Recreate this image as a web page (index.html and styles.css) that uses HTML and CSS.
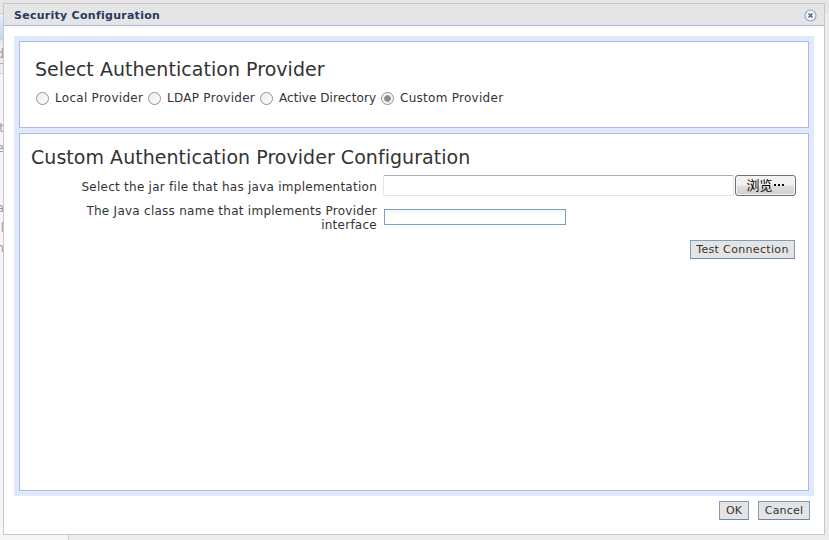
FILE: index.html
```html
<!DOCTYPE html>
<html lang="en">
<head>
<meta charset="utf-8">
<title>Security Configuration</title>
<link rel="stylesheet" href="styles.css">
</head>
<body>
<div class="backdrop" aria-hidden="true">
  <div class="back-top"></div>
  <div class="back-tab"></div>
  <div class="back-tool">d</div>
  <div class="back-line"></div>
  <div class="back-list"><span>t</span><span>e</span><span></span><span></span><span>a</span><span>l</span><span>m</span></div>
  <div class="back-foot"><div class="back-split"></div></div>
</div>
<div class="dialog" role="dialog">
  <header class="title-bar">
    <h1 class="title">Security Configuration</h1>
    <svg class="close" width="13" height="13" viewBox="0 0 13 13"><circle cx="6.5" cy="6.5" r="5.5" fill="#f4f6fb" stroke="#8fa5cf" stroke-width="1.2"/><path d="M4.5 4.5l4 4M8.5 4.5l-4 4" stroke="#555" stroke-width="1.3"/></svg>
  </header>
  <main class="panel">
    <section class="box provider">
      <h2 class="heading select-heading">Select Authentication Provider</h2>
      <div class="options">
        <label class="option local"><i class="radio"></i><span>Local Provider</span></label>
        <label class="option ldap"><i class="radio"></i><span>LDAP Provider</span></label>
        <label class="option active"><i class="radio"></i><span>Active Directory</span></label>
        <label class="option custom"><i class="radio checked"></i><span>Custom Provider</span></label>
      </div>
    </section>
    <section class="box config">
      <h2 class="heading config-heading">Custom Authentication Provider Configuration</h2>
      <div class="row file-row">
        <span class="label">Select the jar file that has java implementation</span>
        <div class="file"></div>
        <button class="browse">浏览<svg width="12" height="3" viewBox="0 0 12 3"><path d="M1 0h2v2h-2zM5 0h2v2h-2zM9 0h2v2h-2z"/></svg></button>
      </div>
      <div class="row class-row">
        <span class="label">The Java class name that implements Provider<br>interface</span>
        <input class="class-name" type="text">
      </div>
      <div class="test-row"><button class="button test">Test Connection</button></div>
    </section>
  </main>
  <footer class="actions">
    <button class="button ok">OK</button>
    <button class="button cancel">Cancel</button>
  </footer>
</div>
</body>
</html>
```
FILE: styles.css
```css
* { box-sizing: border-box; }
body {
  margin: 0;
  width: 829px;
  height: 540px;
  overflow: hidden;
  background: #ececec;
  color: #333;
  font-family: "DejaVu Sans", "Noto Sans CJK SC", sans-serif;
  font-size: 12px;
}
.backdrop { height: 540px; display: flex; flex-direction: column; color: #999; font-size: 12px; }
.back-top { height: 13px; background: #e6e6e6; }
.back-tab { height: 27px; width: 4px; border-top: 1px solid #b9c7e2; background: linear-gradient(#e4edfa, #c3d4ef); }
.back-tool { height: 24px; width: 4px; border-top: 5px solid #e6e6e6; border-bottom: 1px solid #aaa; overflow: hidden; line-height: 18px; direction: rtl; }
.back-line { height: 10px; width: 4px; border-bottom: 1px solid #c9d5e9; }
.back-list { height: 461px; width: 4px; padding-top: 44px; background: #f6f6f6; overflow: hidden; direction: rtl; }
.back-list span { display: block; height: 20px; line-height: 20px; white-space: nowrap; }
.back-foot { height: 5px; width: 69px; background: #f6f6f6; display: flex; justify-content: flex-end; }
.back-split { width: 1px; background: #c4cde4; }
.dialog {
  position: absolute;
  left: 3px;
  top: 3px;
  width: 822px;
  height: 532px;
  border: 1px solid #c8c8c8;
  background: #fff;
}
.title-bar { height: 22px; display: flex; align-items: center; justify-content: space-between; padding: 0 7px 0 10px; background: #e5e5e5; border-bottom: 1px solid #aebbe0; }
.title { margin: 3px 0 0; font: bold 11px/14px "DejaVu Sans", sans-serif; letter-spacing: .27px; color: #2a3860; white-space: nowrap; }
.close { margin-top: 1px; }
.panel { width: 800px; height: 460px; margin: 10px 0 0 10px; padding: 5px; background: #e0e9fb; }
.box { border: 1px solid #aebbdf; background: #fff; }
.provider { height: 87px; padding: 14px 15px; }
.config { height: 358px; margin-top: 5px; padding: 10px 11px; }
.heading { margin: 0; font-weight: 400; font-size: 19px; line-height: 26px; white-space: nowrap; letter-spacing: .04px; }
.options { display: flex; height: 16px; margin-top: 8px; }
.option { display: flex; flex: none; line-height: 16px; white-space: nowrap; letter-spacing: .28px; }
.local, .ldap { width: 112px; }
.active { width: 121px; letter-spacing: .05px; }
.radio { width: 13px; height: 13px; margin: 2px 6px 0 1px; border: 1px solid #929292; border-radius: 50%; background: linear-gradient(135deg, #ececec, #fff); flex: none; }
.checked { background: radial-gradient(circle, #888 0 2px, #999 3px, #f3f3f3 3.8px); }
.row { display: flex; }
.label { width: 346px; text-align: right; line-height: 14px; white-space: nowrap; letter-spacing: .26px; }
.file-row { height: 26px; margin-top: 5px; }
.file-row .label { padding-top: 5px; }
.file { width: 351px; height: 21px; margin-left: 6px; border: 1px solid #e2e5ec; border-top-color: #abadb3; border-radius: 2px; }
.browse { width: 61px; height: 21px; margin: 0 0 0 1px; padding: 0; border: 1px solid #707070; border-radius: 3px; background: linear-gradient(#f2f2f2 0 45%, #dedede 55%, #cfcfcf); box-shadow: inset 0 0 0 1px #f5f5f5; color: #000; font: 13px/18px "Noto Sans CJK SC", sans-serif; display: flex; justify-content: center; }
.browse svg { margin-top: 8px; }
.class-row { height: 39px; padding-top: 3px; }
.class-name { width: 182px; height: 16px; margin: 5px 0 0 7px; padding: 0 2px; border: 1px solid #7f9dc3; background: linear-gradient(#f4f4f4, #fff 5px); }
.button { height: 19px; padding: 0; border: 1px solid #7f9db9; border-bottom-color: #6f88ad; background: #e4e4e4; color: #333; font: 11px/15px "DejaVu Sans", sans-serif; white-space: nowrap; }
.test-row { display: flex; justify-content: flex-end; padding-right: 2px; }
.test { width: 105px; letter-spacing: .34px; }
.actions { display: flex; justify-content: flex-end; gap: 9px; margin-top: 5px; padding-right: 14px; }
.ok { width: 30px; }
.cancel { width: 52px; letter-spacing: .2px; }
```
